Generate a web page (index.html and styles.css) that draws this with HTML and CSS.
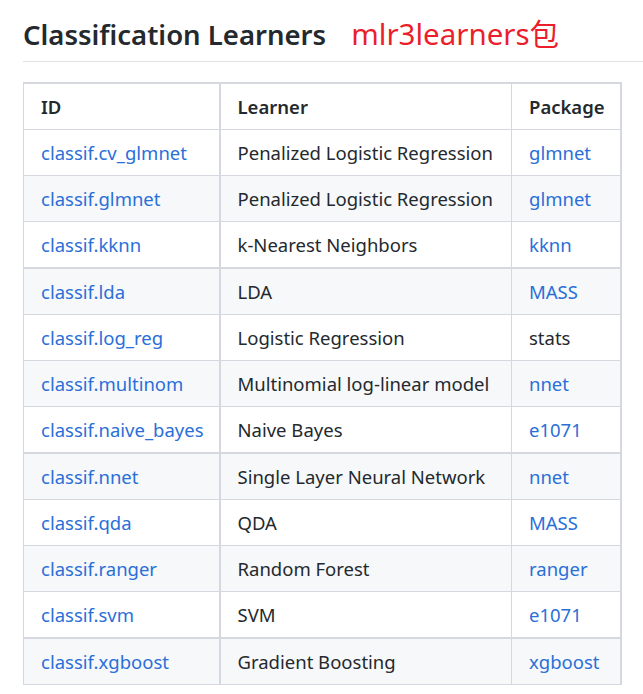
FILE: index.html
```html
<!DOCTYPE html>
<html>
<head>
<meta charset="utf-8">
<link rel="stylesheet" href="styles.css">
</head>
<body>
<div class="page">
  <h2 class="title">Classification Learners <span class="note">mlr3learners包</span></h2>
  <table class="learners">
    <colgroup><col class="c1"><col class="c2"><col class="c3"></colgroup>
    <thead>
      <tr><th>ID</th><th>Learner</th><th>Package</th></tr>
    </thead>
    <tbody>
      <tr><td><a>classif.cv_glmnet</a></td><td>Penalized Logistic Regression</td><td><a>glmnet</a></td></tr>
      <tr><td><a>classif.glmnet</a></td><td>Penalized Logistic Regression</td><td><a>glmnet</a></td></tr>
      <tr><td><a>classif.kknn</a></td><td>k-Nearest Neighbors</td><td><a>kknn</a></td></tr>
      <tr class="thick"><td><a>classif.lda</a></td><td>LDA</td><td><a>MASS</a></td></tr>
      <tr><td><a>classif.log_reg</a></td><td>Logistic Regression</td><td>stats</td></tr>
      <tr><td><a>classif.multinom</a></td><td>Multinomial log-linear model</td><td><a>nnet</a></td></tr>
      <tr><td><a>classif.naive_bayes</a></td><td>Naive Bayes</td><td><a>e1071</a></td></tr>
      <tr class="thick"><td><a>classif.nnet</a></td><td>Single Layer Neural Network</td><td><a>nnet</a></td></tr>
      <tr><td><a>classif.qda</a></td><td>QDA</td><td><a>MASS</a></td></tr>
      <tr><td><a>classif.ranger</a></td><td>Random Forest</td><td><a>ranger</a></td></tr>
      <tr><td><a>classif.svm</a></td><td>SVM</td><td><a>e1071</a></td></tr>
      <tr class="thick"><td><a>classif.xgboost</a></td><td>Gradient Boosting</td><td><a>xgboost</a></td></tr>
    </tbody>
  </table>
</div>
</body>
</html>
```

FILE: styles.css
```css
html, body {
  margin: 0;
  padding: 0;
  background: #ffffff;
}
body {
  font-family: "Segoe UI", "Noto Sans", "Open Sans", sans-serif;
  color: #24292e;
}
.page {
  padding: 14px 0 0 23px;
}
.title {
  margin: 0 0 20px 0;
  font-size: 27.5px;
  font-weight: 600;
  line-height: 40px;
  padding-bottom: 6px;
  border-bottom: 1px solid #dfe2e5;
  white-space: nowrap;
}
.note {
  margin-left: 18px;
  color: #ea1f2b;
  font-weight: 400;
  font-size: 29.5px;
  font-family: "Noto Sans", "Noto Sans CJK SC", sans-serif;
}
.learners {
  border-collapse: collapse;
  table-layout: fixed;
  width: 597px;
  font-size: 18.5px;
  line-height: 30px;
}
.c1 { width: 196px; }
.c2 { width: 292px; }
.c3 { width: 109px; }
.learners th,
.learners td {
  border: 1px solid #d5d9df;
  padding: 7.5px 10px 7.5px 17px;
  text-align: left;
  white-space: nowrap;
  overflow: hidden;
}
.learners th {
  font-weight: 600;
  border-top-width: 2px;
}
.learners tbody tr:nth-child(2n) {
  background: #f6f8fa;
}
.learners tr.thick td {
  border-top: 2px solid #d5d9df;
}
.learners td:first-child,
.learners th:first-child,
.learners td:last-child,
.learners th:last-child {
  border-right-width: 2px;
}
.learners a {
  color: #2a6fd8;
}
```
